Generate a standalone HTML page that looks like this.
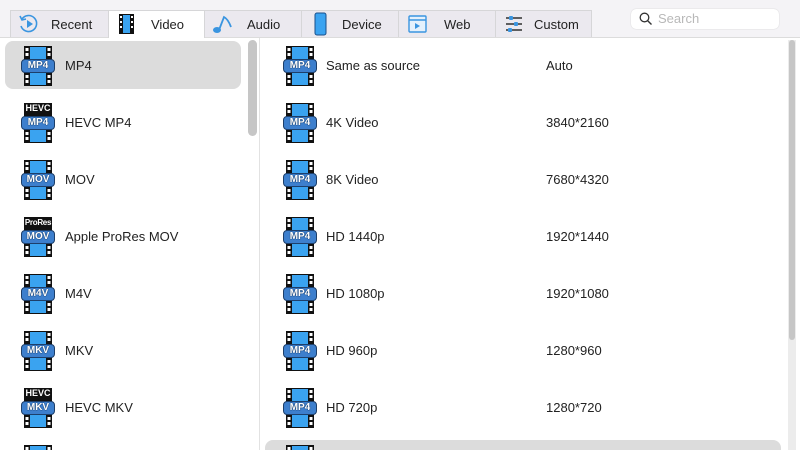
<!DOCTYPE html>
<html><head><style>
html,body{margin:0;width:800px;height:450px;overflow:hidden}
body{background:#fff;font-family:"Liberation Sans",sans-serif;position:relative}
.top{position:absolute;left:0;top:0;width:800px;height:37px;background:#f4f3f6;border-bottom:1px solid #dcdcdc}
.tab{position:absolute;top:10px;height:27px;background:#ebe9ef;border:1px solid #d6d6d8;border-bottom:none;box-sizing:border-box;font-size:13px;color:#222;line-height:27px}
.tab.act{background:#fff;height:28px}
.tab span{position:absolute;left:50px}
.tab svg{position:absolute;left:6px;top:2px}
.search{position:absolute;left:631px;top:9px;width:148px;height:20px;background:#fff;border-radius:5px;box-shadow:0 0 1px #bbb;font-size:13px;color:#b8b8b8;line-height:20px}
.row{position:absolute;height:48px;font-size:13px;color:#222}
.ic{position:absolute;width:34px;height:40px}
.lbl{position:absolute;left:0;width:34px;top:13px;height:14px;background:#3d7fcd;border:1px solid #1d3f6a;box-sizing:border-box;border-radius:4px;color:#fff;font-weight:bold;font-size:10px;text-align:center;line-height:12px;text-shadow:0 0 1px #0d2a4d,0 0 1px #0d2a4d}
.hv{position:absolute;left:3px;top:0;width:28px;height:11px;background:#111;color:#fff;font-size:9px;font-weight:bold;text-align:center;line-height:11px}
.t{position:absolute;top:0;line-height:48px}
</style></head><body>
<svg width="0" height="0" style="position:absolute"><defs>
<symbol id="film" viewBox="0 0 34 40"><rect x="3" y="0" width="28" height="40" fill="#111"/>
<rect x="9" y="1" width="16" height="12" fill="#3aa3f0"/><rect x="9" y="27" width="16" height="12" fill="#3aa3f0"/>
<g fill="#fff"><rect x="4.5" y="2" width="3" height="3"/><rect x="4.5" y="7" width="3" height="3"/><rect x="26.5" y="2" width="3" height="3"/><rect x="26.5" y="7" width="3" height="3"/>
<rect x="4.5" y="29" width="3" height="3"/><rect x="4.5" y="34" width="3" height="3"/><rect x="26.5" y="29" width="3" height="3"/><rect x="26.5" y="34" width="3" height="3"/></g></symbol>
<symbol id="filmh" viewBox="0 0 34 40"><rect x="3" y="0" width="28" height="40" fill="#111"/>
<rect x="9" y="27" width="16" height="12" fill="#3aa3f0"/>
<g fill="#fff"><rect x="4.5" y="29" width="3" height="3"/><rect x="4.5" y="34" width="3" height="3"/><rect x="26.5" y="29" width="3" height="3"/><rect x="26.5" y="34" width="3" height="3"/></g></symbol>
</defs></svg>
<div class="top"></div>
<div class="tab" style="left:10px;width:99px"><svg width="24" height="22" viewBox="0 0 24 22"><path d="M5 6 A8 8 0 1 1 4 13" fill="none" stroke="#3a95e0" stroke-width="1.6"/><path d="M3 3 L5 7 L9 6" fill="none" stroke="#3a95e0" stroke-width="1.6"/><path d="M10 7 L16 11 L10 15Z" fill="#3a95e0"/></svg><span style="left:40px">Recent</span></div>
<div class="tab act" style="left:108px;width:97px"><svg width="24" height="22" viewBox="0 0 24 22"><rect x="4" y="1" width="15" height="20" fill="#111"/><rect x="8" y="2" width="7" height="18" fill="#3aa3f0"/><g fill="#fff"><rect x="5" y="3" width="2" height="2"/><rect x="5" y="8" width="2" height="2"/><rect x="5" y="13" width="2" height="2"/><rect x="16" y="3" width="2" height="2"/><rect x="16" y="8" width="2" height="2"/><rect x="16" y="13" width="2" height="2"/></g></svg><span style="left:42px">Video</span></div>
<div class="tab" style="left:204px;width:98px"><svg width="24" height="22" viewBox="0 0 24 22"><path d="M8 17 L13 4 Q17 6 20 14" fill="none" stroke="#3a95e0" stroke-width="1.8"/><ellipse cx="6" cy="17" rx="4" ry="3" fill="#3a95e0"/></svg><span style="left:42px">Audio</span></div>
<div class="tab" style="left:301px;width:98px"><svg width="24" height="24" viewBox="0 0 24 24" style="top:1px"><rect x="7" y="1" width="11" height="22" rx="2" fill="#3aa3f0" stroke="#1a4f8a"/></svg><span style="left:40px">Device</span></div>
<div class="tab" style="left:398px;width:98px"><svg width="24" height="22" viewBox="0 0 24 22"><rect x="4" y="3" width="17" height="16" rx="1" fill="#e4f1fc" stroke="#3a95e0" stroke-width="1.4"/><line x1="4" y1="7" x2="21" y2="7" stroke="#3a95e0" stroke-width="1.4"/><path d="M10 10 L15 13 L10 16Z" fill="#3a95e0"/></svg><span style="left:45px">Web</span></div>
<div class="tab" style="left:495px;width:97px"><svg width="24" height="22" viewBox="0 0 24 22"><g stroke="#222" stroke-width="1.4"><line x1="4" y1="5" x2="20" y2="5"/><line x1="4" y1="11" x2="20" y2="11"/><line x1="4" y1="17" x2="20" y2="17"/></g><g fill="#3a95e0"><rect x="7" y="3" width="4" height="4" rx="1"/><rect x="12" y="9" width="4" height="4" rx="1"/><rect x="6" y="15" width="4" height="4" rx="1"/></g></svg><span style="left:38px">Custom</span></div>
<div class="search"><svg width="14" height="14" viewBox="0 0 14 14" style="position:absolute;left:8px;top:3px"><circle cx="5.5" cy="5.5" r="4.3" fill="none" stroke="#333" stroke-width="1.3"/><line x1="8.7" y1="8.7" x2="12.5" y2="12.5" stroke="#333" stroke-width="1.4"/></svg><span style="position:absolute;left:27px">Search</span></div>

<div style="position:absolute;left:259px;top:38px;width:1px;height:412px;background:#e2e2e2"></div>
<div style="position:absolute;left:248px;top:40px;width:9px;height:96px;background:#c6c6c6;border-radius:5px"></div>
<div style="position:absolute;left:788px;top:40px;width:8px;height:410px;background:#ececec"></div>
<div style="position:absolute;left:789px;top:40px;width:6px;height:300px;background:#c6c6c6;border-radius:4px"></div>

<div style="position:absolute;left:5px;top:41px;width:236px;height:48px;background:#dcdcdc;border-radius:8px"></div>
<div style="position:absolute;left:265px;top:440px;width:516px;height:10px;background:#dcdcdc;border-radius:8px 8px 0 0"></div>

<div class="row" style="left:0;top:42px;width:246px"><div class="ic" style="left:21px;top:4px"><svg width="34" height="40"><use href="#film"/></svg><div class="lbl">MP4</div></div><div class="t" style="left:65px">MP4</div></div>
<div class="row" style="left:0;top:99px;width:246px"><div class="ic" style="left:21px;top:4px"><svg width="34" height="40"><use href="#filmh"/></svg><div class="hv">HEVC</div><div class="lbl">MP4</div></div><div class="t" style="left:65px">HEVC MP4</div></div>
<div class="row" style="left:0;top:156px;width:246px"><div class="ic" style="left:21px;top:4px"><svg width="34" height="40"><use href="#film"/></svg><div class="lbl">MOV</div></div><div class="t" style="left:65px">MOV</div></div>
<div class="row" style="left:0;top:213px;width:246px"><div class="ic" style="left:21px;top:4px"><svg width="34" height="40"><use href="#filmh"/></svg><div class="hv" style="font-size:8px;letter-spacing:-.3px">ProRes</div><div class="lbl">MOV</div></div><div class="t" style="left:65px">Apple ProRes MOV</div></div>
<div class="row" style="left:0;top:270px;width:246px"><div class="ic" style="left:21px;top:4px"><svg width="34" height="40"><use href="#film"/></svg><div class="lbl">M4V</div></div><div class="t" style="left:65px">M4V</div></div>
<div class="row" style="left:0;top:327px;width:246px"><div class="ic" style="left:21px;top:4px"><svg width="34" height="40"><use href="#film"/></svg><div class="lbl">MKV</div></div><div class="t" style="left:65px">MKV</div></div>
<div class="row" style="left:0;top:384px;width:246px"><div class="ic" style="left:21px;top:4px"><svg width="34" height="40"><use href="#filmh"/></svg><div class="hv">HEVC</div><div class="lbl">MKV</div></div><div class="t" style="left:65px">HEVC MKV</div></div>
<svg style="position:absolute;left:21px;top:445px" width="34" height="5" viewBox="0 0 34 5"><use href="#film" width="34" height="40"/></svg>

<div class="row" style="left:262px;top:42px;width:520px"><div class="ic" style="left:21px;top:4px"><svg width="34" height="40"><use href="#film"/></svg><div class="lbl">MP4</div></div><div class="t" style="left:64px">Same as source</div><div class="t" style="left:284px">Auto</div></div>
<div class="row" style="left:262px;top:99px;width:520px"><div class="ic" style="left:21px;top:4px"><svg width="34" height="40"><use href="#film"/></svg><div class="lbl">MP4</div></div><div class="t" style="left:64px">4K Video</div><div class="t" style="left:284px">3840*2160</div></div>
<div class="row" style="left:262px;top:156px;width:520px"><div class="ic" style="left:21px;top:4px"><svg width="34" height="40"><use href="#film"/></svg><div class="lbl">MP4</div></div><div class="t" style="left:64px">8K Video</div><div class="t" style="left:284px">7680*4320</div></div>
<div class="row" style="left:262px;top:213px;width:520px"><div class="ic" style="left:21px;top:4px"><svg width="34" height="40"><use href="#film"/></svg><div class="lbl">MP4</div></div><div class="t" style="left:64px">HD 1440p</div><div class="t" style="left:284px">1920*1440</div></div>
<div class="row" style="left:262px;top:270px;width:520px"><div class="ic" style="left:21px;top:4px"><svg width="34" height="40"><use href="#film"/></svg><div class="lbl">MP4</div></div><div class="t" style="left:64px">HD 1080p</div><div class="t" style="left:284px">1920*1080</div></div>
<div class="row" style="left:262px;top:327px;width:520px"><div class="ic" style="left:21px;top:4px"><svg width="34" height="40"><use href="#film"/></svg><div class="lbl">MP4</div></div><div class="t" style="left:64px">HD 960p</div><div class="t" style="left:284px">1280*960</div></div>
<div class="row" style="left:262px;top:384px;width:520px"><div class="ic" style="left:21px;top:4px"><svg width="34" height="40"><use href="#film"/></svg><div class="lbl">MP4</div></div><div class="t" style="left:64px">HD 720p</div><div class="t" style="left:284px">1280*720</div></div>
<svg style="position:absolute;left:283px;top:445px" width="34" height="5" viewBox="0 0 34 5"><use href="#film" width="34" height="40"/></svg>
</body></html>
